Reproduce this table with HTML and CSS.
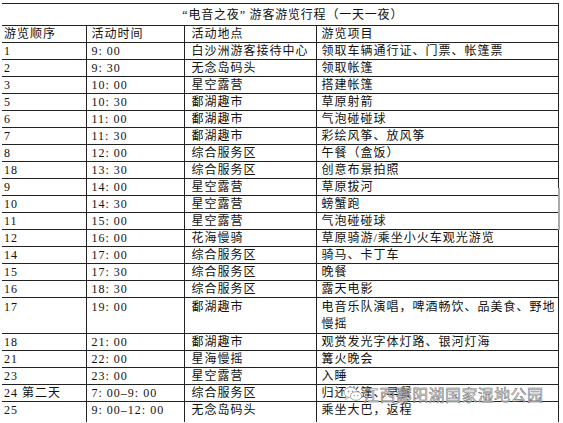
FILE: index.html
```html
<!DOCTYPE html>
<html lang="zh-CN">
<head>
<meta charset="utf-8">
<title>“电音之夜” 游客游览行程</title>
<link rel="stylesheet" href="styles.css">
</head>
<body>
<div class="page">
  <table class="sched">
    <colgroup>
      <col class="c1"><col class="c2"><col class="c3"><col class="c4">
    </colgroup>
    <tr class="title-row"><td colspan="4" class="title">“电音之夜” 游客游览行程（一天一夜）</td></tr>
    <tr><td>游览顺序</td><td class="t">活动时间</td><td class="p">活动地点</td><td class="i">游览项目</td></tr>
    <tr><td>1</td><td class="t">9: 00</td><td class="p">白沙洲游客接待中心</td><td class="i">领取车辆通行证、门票、帐篷票</td></tr>
    <tr><td>2</td><td class="t">9: 30</td><td class="p">无念岛码头</td><td class="i">领取帐篷</td></tr>
    <tr><td>3</td><td class="t">10: 00</td><td class="p">星空露营</td><td class="i">搭建帐篷</td></tr>
    <tr><td>5</td><td class="t">10: 30</td><td class="p">鄱湖趣市</td><td class="i">草原射箭</td></tr>
    <tr><td>6</td><td class="t">11: 00</td><td class="p">鄱湖趣市</td><td class="i">气泡碰碰球</td></tr>
    <tr><td>7</td><td class="t">11: 30</td><td class="p">鄱湖趣市</td><td class="i">彩绘风筝、放风筝</td></tr>
    <tr><td>8</td><td class="t">12: 00</td><td class="p">综合服务区</td><td class="i">午餐（盒饭）</td></tr>
    <tr><td>18</td><td class="t">13: 30</td><td class="p">综合服务区</td><td class="i">创意布景拍照</td></tr>
    <tr><td>9</td><td class="t">14: 00</td><td class="p">星空露营</td><td class="i">草原拔河</td></tr>
    <tr><td>10</td><td class="t">14: 30</td><td class="p">星空露营</td><td class="i">螃蟹跑</td></tr>
    <tr><td>11</td><td class="t">15: 00</td><td class="p">星空露营</td><td class="i">气泡碰碰球</td></tr>
    <tr><td>12</td><td class="t">16: 00</td><td class="p">花海慢骑</td><td class="i">草原骑游/乘坐小火车观光游览</td></tr>
    <tr><td>14</td><td class="t">17: 00</td><td class="p">综合服务区</td><td class="i">骑马、卡丁车</td></tr>
    <tr><td>15</td><td class="t">17: 30</td><td class="p">综合服务区</td><td class="i">晚餐</td></tr>
    <tr><td>16</td><td class="t">18: 30</td><td class="p">综合服务区</td><td class="i">露天电影</td></tr>
    <tr class="tall"><td>17</td><td class="t">19: 00</td><td class="p">鄱湖趣市</td><td class="i">电音乐队演唱，啤酒畅饮、品美食、野地<br>慢摇</td></tr>
    <tr><td>18</td><td class="t">21: 00</td><td class="p">鄱湖趣市</td><td class="i">观赏发光字体灯路、银河灯海</td></tr>
    <tr><td>21</td><td class="t">22: 00</td><td class="p">星海慢摇</td><td class="i">篝火晚会</td></tr>
    <tr><td>23</td><td class="t">23: 00</td><td class="p">星空露营</td><td class="i">入睡</td></tr>
    <tr><td>24 第二天</td><td class="t">7: 00–9: 00</td><td class="p">综合服务区</td><td class="i">归还帐篷、早餐</td></tr>
    <tr class="last"><td>25</td><td class="t">9: 00–12: 00</td><td class="p">无念岛码头</td><td class="i">乘坐大巴，返程</td></tr>
  </table>
  <div class="scrollmark"></div>
  <div class="watermark">
    <svg class="wm-icon" width="20" height="16" viewBox="0 0 20 16">
      <ellipse cx="7.5" cy="6.5" rx="6.5" ry="5.2" fill="#fff" stroke="#aaa" stroke-width="1"/>
      <path d="M3.5 10.5 L2.5 13.5 L6 11.5 Z" fill="#fff" stroke="#aaa" stroke-width="0.8"/>
      <ellipse cx="13" cy="10" rx="5.5" ry="4.3" fill="#fff" stroke="#aaa" stroke-width="1"/>
      <circle cx="5.5" cy="5.5" r="0.9" fill="#999"/>
      <circle cx="9.5" cy="5.5" r="0.9" fill="#999"/>
      <circle cx="11.3" cy="9.5" r="0.7" fill="#999"/>
      <circle cx="14.7" cy="9.5" r="0.7" fill="#999"/>
    </svg>
    <span class="wm-text">江西鄱阳湖国家湿地公园</span>
  </div>
</div>
</body>
</html>
```

FILE: styles.css
```css
html, body {
  margin: 0;
  padding: 0;
  background: #fff;
}

.page {
  position: relative;
  width: 563px;
  height: 423px;
  overflow: hidden;
  padding: 3px 0 0 2px;
  box-sizing: border-box;
}

.sched {
  border-collapse: collapse;
  table-layout: fixed;
  width: 556px;
  font-family: "Liberation Serif", "Noto Sans CJK SC", serif;
  font-size: 12px;
  letter-spacing: 1px;
  color: #111;
}

.c1 { width: 84px; }
.c2 { width: 98px; }
.c3 { width: 132px; }
.c4 { width: 242px; }

.sched td {
  border-top: 1px solid #222;
  border-right: 1px solid #222;
  height: 16px;
  padding: 0 0 0 2px;
  line-height: 16px;
  vertical-align: middle;
  white-space: nowrap;
  overflow: hidden;
}

.sched td.t { padding-left: 5px; }
.sched td.p { padding-left: 7px; }
.sched td.i { padding-left: 5px; }

.sched tr.title-row td {
  height: 21px;
  text-align: center;
  padding-left: 26px;
  letter-spacing: 0.8px;
}

.sched tr.tall td {
  height: 33px;
  vertical-align: top;
  padding-top: 1px;
  line-height: 17px;
}

.sched tr.last td {
  height: 20px;
  vertical-align: top;
  line-height: 17px;
}

.scrollmark {
  position: absolute;
  left: 558px;
  top: 188px;
  width: 2px;
  height: 42px;
  background: #aaa;
}

.watermark {
  position: absolute;
  left: 343px;
  top: 385px;
  display: flex;
  align-items: center;
}

.wm-icon {
  display: block;
}

.wm-text {
  font-family: "Noto Sans CJK SC", sans-serif;
  font-size: 16px;
  line-height: 18px;
  letter-spacing: 0.4px;
  color: rgba(255, 255, 255, 0.75);
  -webkit-text-stroke: 0.6px #777;
}
```
